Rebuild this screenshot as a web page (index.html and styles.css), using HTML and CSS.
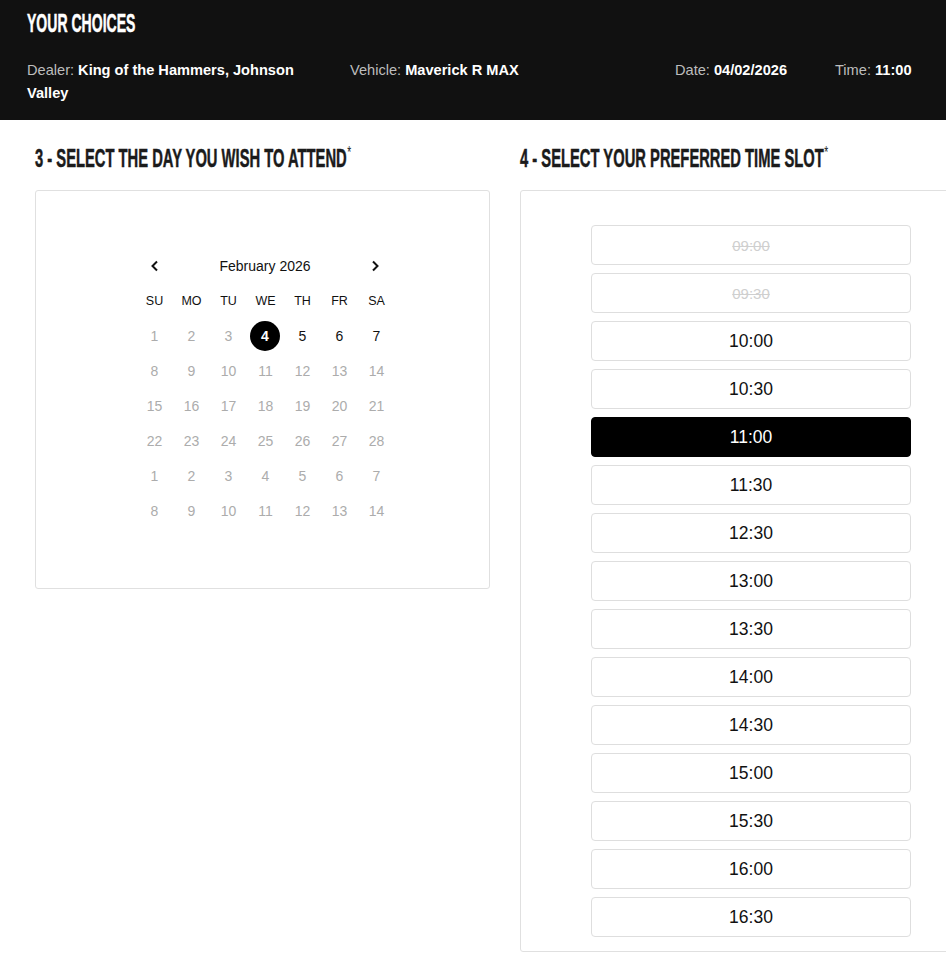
FILE: index.html
```html
<!DOCTYPE html>
<html lang="en">
<head>
<meta charset="utf-8">
<title>Your choices</title>
<link rel="stylesheet" href="styles.css">
</head>
<body>
<header class="choices">
  <h1 class="choices-title"><span class="condensed">YOUR CHOICES</span></h1>
  <div class="choices-row">
    <div class="choice choice-dealer"><span class="label">Dealer:</span> <b>King of the Hammers, Johnson Valley</b></div>
    <div class="choice"><span class="label">Vehicle:</span> <b>Maverick R MAX</b></div>
    <div class="choice"><span class="label">Date:</span> <b>04/02/2026</b></div>
    <div class="choice"><span class="label">Time:</span> <b>11:00</b></div>
  </div>
</header>

<main class="steps">
  <section class="step step-day">
    <h2 class="step-title"><span class="condensed">3 - SELECT THE DAY YOU WISH TO ATTEND<span class="req">*</span></span></h2>
    <div class="panel calendar-panel">
      <div class="calendar">
        <div class="cal-head">
          <button class="cal-nav" aria-label="Previous month">
            <svg width="10" height="12" viewBox="0 0 10 12"><path d="M7 1.5 L2.5 6 L7 10.5" fill="none" stroke="#111" stroke-width="2"/></svg>
          </button>
          <span class="cal-month">February 2026</span>
          <button class="cal-nav" aria-label="Next month">
            <svg width="10" height="12" viewBox="0 0 10 12"><path d="M3 1.5 L7.5 6 L3 10.5" fill="none" stroke="#111" stroke-width="2"/></svg>
          </button>
        </div>
        <div class="cal-grid">
          <span class="wd">SU</span><span class="wd">MO</span><span class="wd">TU</span><span class="wd">WE</span><span class="wd">TH</span><span class="wd">FR</span><span class="wd">SA</span>
          <span class="d off">1</span><span class="d off">2</span><span class="d off">3</span><span class="d sel"><i>4</i></span><span class="d">5</span><span class="d">6</span><span class="d">7</span>
          <span class="d off">8</span><span class="d off">9</span><span class="d off">10</span><span class="d off">11</span><span class="d off">12</span><span class="d off">13</span><span class="d off">14</span>
          <span class="d off">15</span><span class="d off">16</span><span class="d off">17</span><span class="d off">18</span><span class="d off">19</span><span class="d off">20</span><span class="d off">21</span>
          <span class="d off">22</span><span class="d off">23</span><span class="d off">24</span><span class="d off">25</span><span class="d off">26</span><span class="d off">27</span><span class="d off">28</span>
          <span class="d off">1</span><span class="d off">2</span><span class="d off">3</span><span class="d off">4</span><span class="d off">5</span><span class="d off">6</span><span class="d off">7</span>
          <span class="d off">8</span><span class="d off">9</span><span class="d off">10</span><span class="d off">11</span><span class="d off">12</span><span class="d off">13</span><span class="d off">14</span>
        </div>
      </div>
    </div>
  </section>

  <section class="step step-time">
    <h2 class="step-title"><span class="condensed">4 - SELECT YOUR PREFERRED TIME SLOT<span class="req">*</span></span></h2>
    <div class="panel slots-panel">
      <div class="slot disabled">09:00</div>
      <div class="slot disabled">09:30</div>
      <div class="slot">10:00</div>
      <div class="slot">10:30</div>
      <div class="slot selected">11:00</div>
      <div class="slot">11:30</div>
      <div class="slot">12:30</div>
      <div class="slot">13:00</div>
      <div class="slot">13:30</div>
      <div class="slot">14:00</div>
      <div class="slot">14:30</div>
      <div class="slot">15:00</div>
      <div class="slot">15:30</div>
      <div class="slot">16:00</div>
      <div class="slot">16:30</div>
    </div>
  </section>
</main>
</body>
</html>
```

FILE: styles.css
```css
html, body {
  margin: 0;
  padding: 0;
  overflow: hidden;
  background: #fff;
}
body {
  font-family: "Liberation Sans", Arial, sans-serif;
  color: #111;
}

.condensed {
  display: inline-block;
  font-family: "Liberation Sans", Arial, sans-serif;
  font-weight: 700;
  transform-origin: left center;
  white-space: nowrap;
  -webkit-text-stroke: 0.5px currentColor;
}

/* Header */
.choices {
  background: #111;
  color: #fff;
  padding: 9px 31px 15px 27px;
  height: 96px;
}
.choices-title {
  margin: 0;
  font-size: 26px;
  line-height: 28px;
  font-weight: 700;
}
.choices-title .condensed {
  transform: scaleX(0.54);
}
.choices-row {
  display: grid;
  grid-template-columns: 323px 325px 160px auto;
  margin-top: 22px;
  font-size: 14.6px;
  line-height: 23px;
}
.choice .label {
  color: #bdbdbd;
}
.choice b {
  color: #fff;
  font-weight: 700;
}
.choice-dealer {
  padding-right: 30px;
}

/* Steps */
.steps {
  display: flex;
  gap: 30px;
  padding: 24px 0 0 35px;
  width: 1100px;
}
.step-title {
  margin: 0 0 18px;
  font-size: 25px;
  line-height: 28px;
  font-weight: 700;
  color: #1b1b1b;
}
.step-title .condensed {
  transform: scaleX(0.59);
}
.req {
  display: inline-block;
  font-size: 17px;
  font-weight: 400;
  line-height: 0;
  vertical-align: 9px;
  margin-left: 1px;
  -webkit-text-stroke: 0;
}

.step-day {
  width: 455px;
  flex-shrink: 0;
}
.step-time {
  width: 462px;
  flex-shrink: 0;
}
.panel {
  border: 1px solid #e0e0e0;
  border-radius: 3px;
  box-sizing: border-box;
}

/* Calendar */
.calendar-panel {
  height: 399px;
  padding: 58px 0 0 100px;
}
.calendar {
  width: 259px;
}
.cal-head {
  display: flex;
  align-items: center;
  justify-content: space-between;
  height: 34px;
  padding: 0 15px 0 14px;
}
.cal-nav {
  border: 0;
  background: none;
  padding: 0;
  width: 10px;
  height: 12px;
  display: flex;
  cursor: pointer;
}
.cal-month {
  font-size: 14px;
  color: #111;
}
.cal-grid {
  display: grid;
  grid-template-columns: repeat(7, 37px);
  grid-auto-rows: 35px;
}
.cal-grid span {
  display: flex;
  align-items: center;
  justify-content: center;
}
.wd {
  font-size: 12.5px;
  color: #111;
}
.d {
  font-size: 14px;
  color: #111;
}
.d.off {
  color: #acacac;
}
.d.sel i {
  font-style: normal;
  width: 30px;
  height: 30px;
  margin-left: -1px;
  border-radius: 50%;
  background: #000;
  color: #fff;
  display: flex;
  align-items: center;
  justify-content: center;
  font-weight: 700;
}

/* Slots */
.slots-panel {
  padding: 34px 0 6px 70px;
}
.slot {
  box-sizing: border-box;
  width: 320px;
  height: 40px;
  margin-bottom: 8px;
  border: 1px solid #dedede;
  border-radius: 4px;
  display: flex;
  align-items: center;
  justify-content: center;
  font-size: 17.5px;
  color: #111;
}
.slot.disabled {
  font-size: 15px;
  color: #cfcfcf;
  text-decoration: line-through;
}
.slot.selected {
  background: #000;
  border-color: #000;
  color: #fff;
}
```
